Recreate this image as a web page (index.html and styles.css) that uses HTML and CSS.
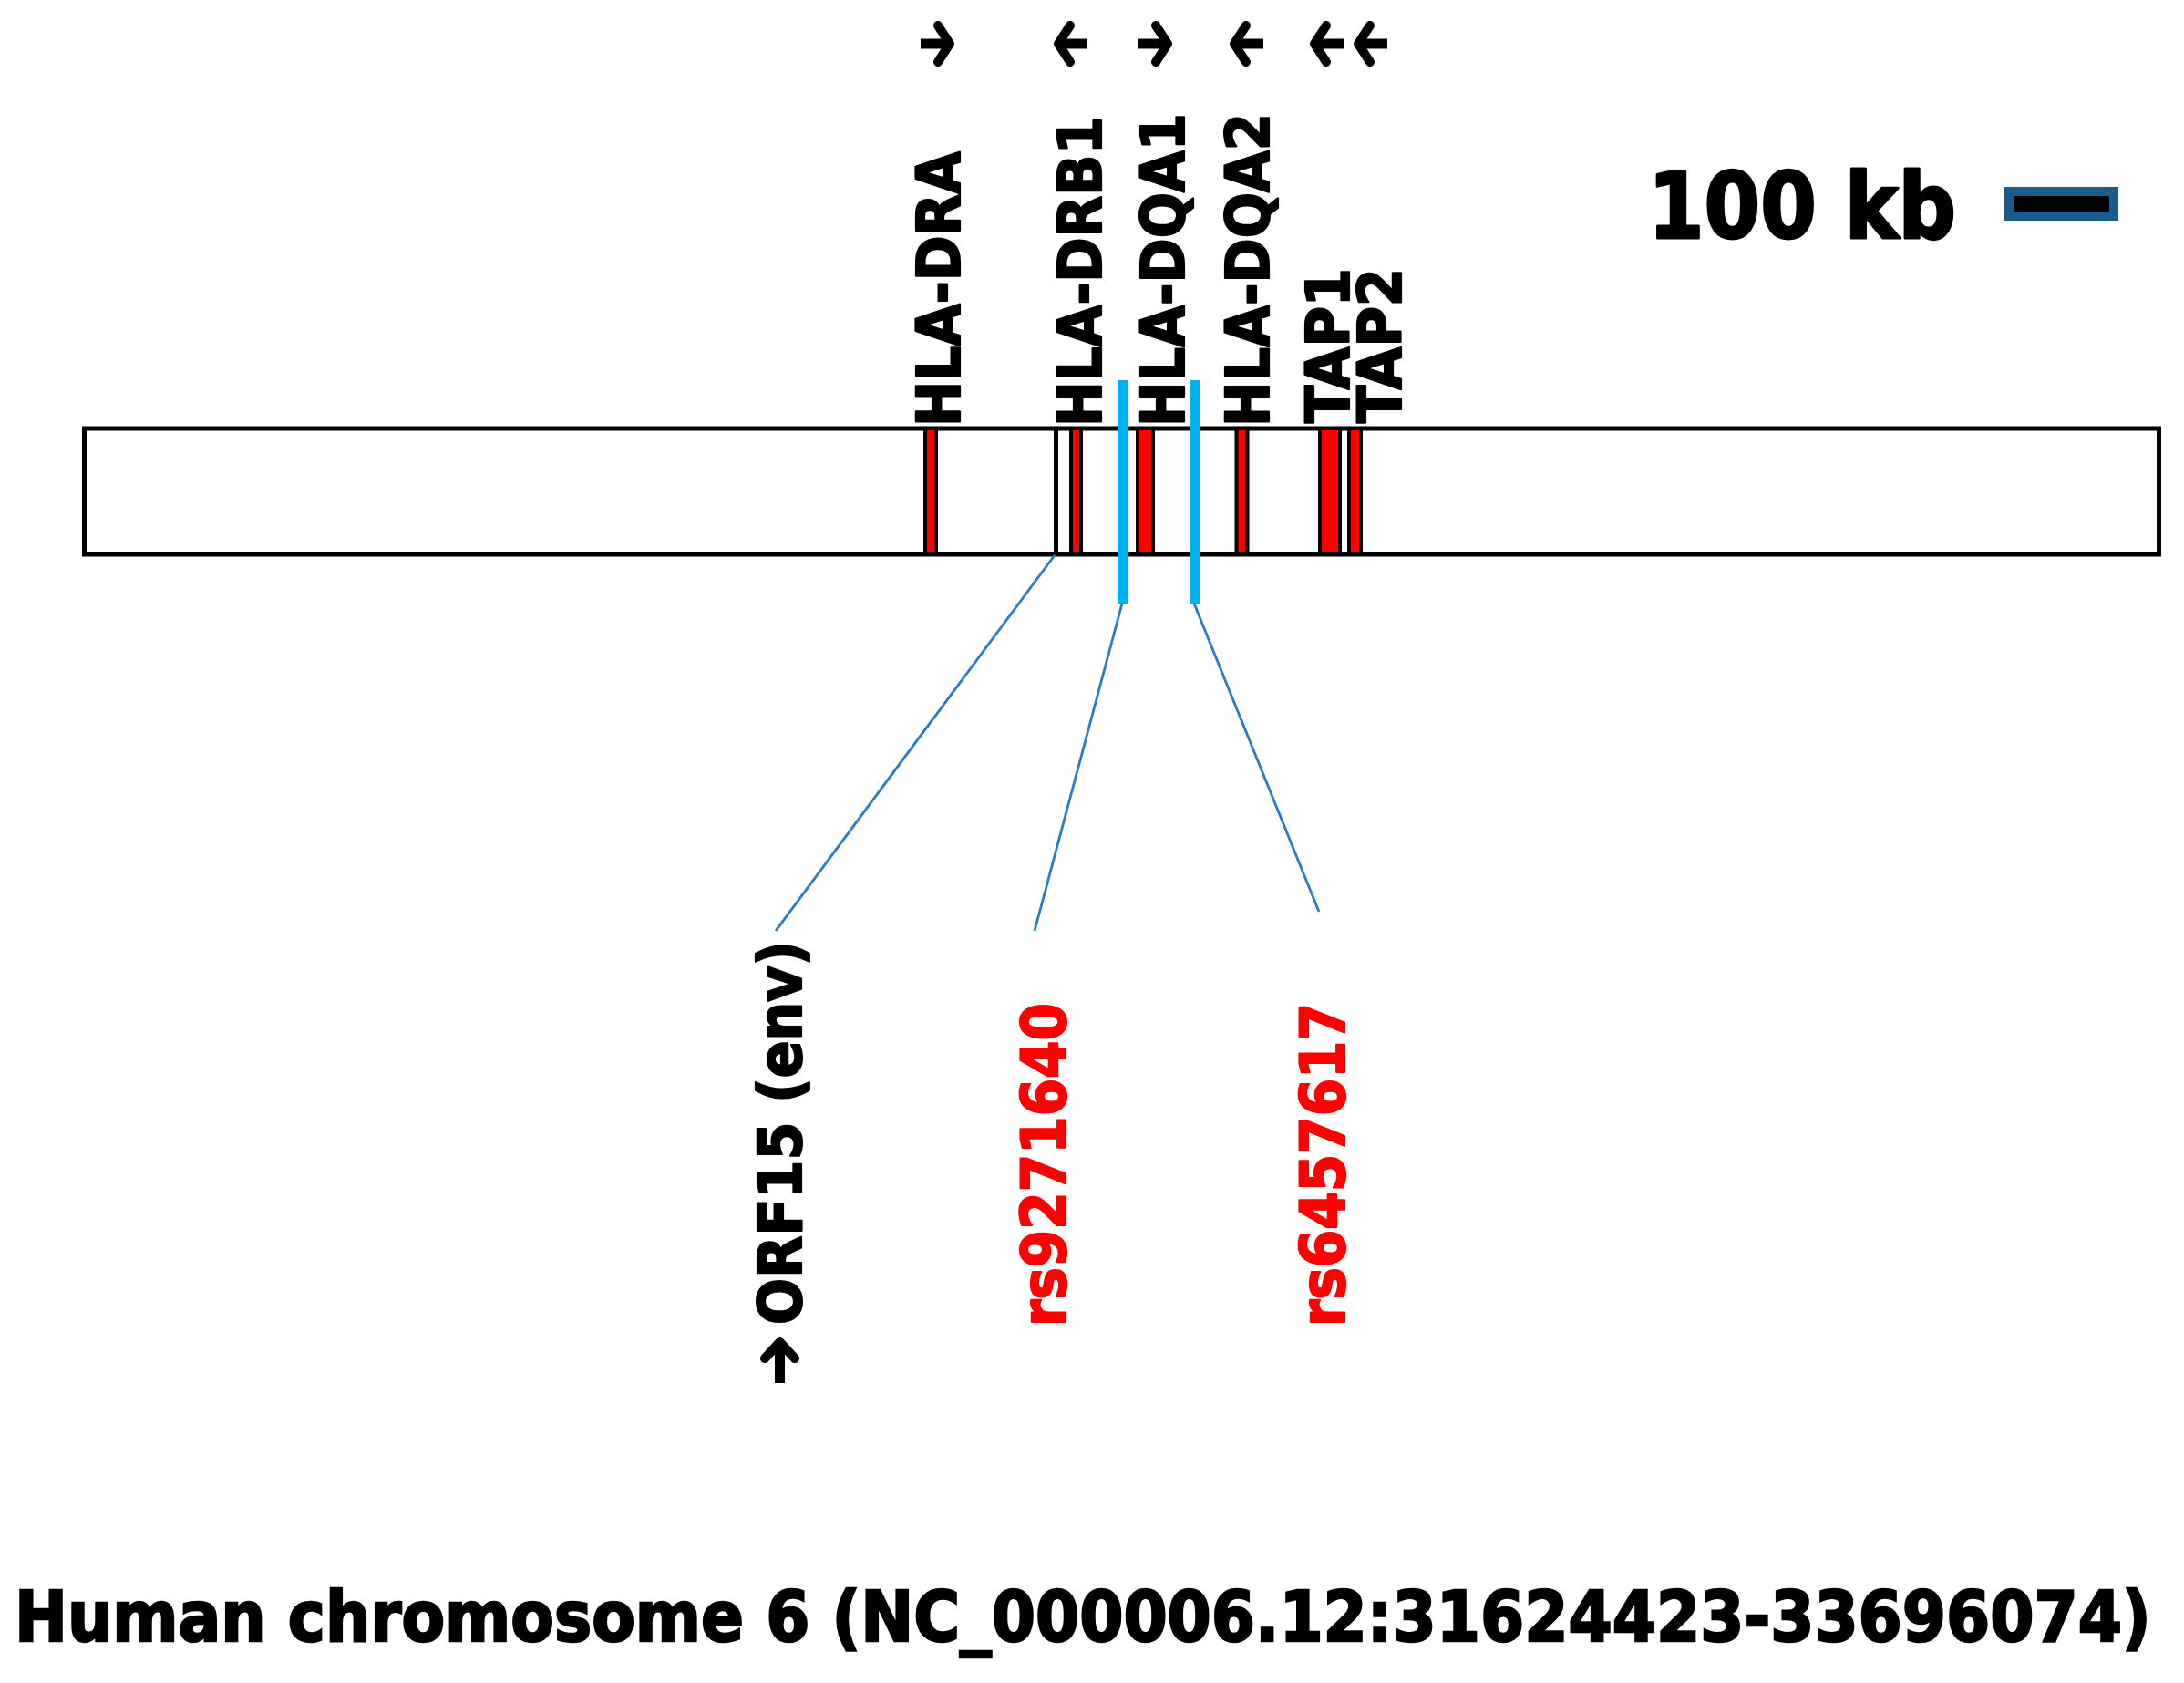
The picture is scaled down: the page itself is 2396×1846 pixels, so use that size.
FILE: index.html
```html
<!DOCTYPE html>
<html lang="en">
<head>
<meta charset="utf-8">
<title>Human chromosome 6 map</title>
<link rel="stylesheet" href="styles.css">
</head>
<body>
<div class="figure">
  <svg class="map" width="2396" height="1700" viewBox="0 0 2396 1700" xmlns="http://www.w3.org/2000/svg">
    <defs>
      <g id="arr-r">
        <path class="arrow-shaft" d="M0 25 H31"/>
        <path class="arrow-head" d="M19 5 L32 25 L19 45"/>
      </g>
      <g id="arr-l">
        <path class="arrow-shaft" d="M37 25 H6"/>
        <path class="arrow-head" d="M18 5 L5 25 L18 45"/>
      </g>
    </defs>

    <!-- strand arrows -->
    <use href="#arr-r" transform="translate(1010 23)"/>
    <use href="#arr-l" transform="translate(1156 23)"/>
    <use href="#arr-r" transform="translate(1249 23)"/>
    <use href="#arr-l" transform="translate(1349 23)"/>
    <use href="#arr-l" transform="translate(1437 23)"/>
    <use href="#arr-l" transform="translate(1485 23)"/>

    <!-- gene labels -->
    <text class="label" transform="translate(1053 468) rotate(-90)" textLength="302" lengthAdjust="spacingAndGlyphs">HLA-DRA</text>
    <text class="label" transform="translate(1208 468) rotate(-90)" textLength="340" lengthAdjust="spacingAndGlyphs">HLA-DRB1</text>
    <text class="label" transform="translate(1299 468) rotate(-90)" textLength="344" lengthAdjust="spacingAndGlyphs">HLA-DQA1</text>
    <text class="label" transform="translate(1392 468) rotate(-90)" textLength="344" lengthAdjust="spacingAndGlyphs">HLA-DQA2</text>
    <text class="label" transform="translate(1480 464) rotate(-90)" textLength="170" lengthAdjust="spacingAndGlyphs">TAP1</text>
    <text class="label" transform="translate(1537 464) rotate(-90)" textLength="170" lengthAdjust="spacingAndGlyphs">TAP2</text>

    <!-- scale -->
    <text class="scale-text" x="1808" y="261" textLength="338" lengthAdjust="spacingAndGlyphs">100 kb</text>
    <rect class="scale-bar" x="2204" y="210" width="115" height="27"/>

    <!-- chromosome -->
    <rect class="chrom" x="92.5" y="470" width="2276" height="138"/>
    <rect class="band" x="1015" y="470" width="12" height="138"/>
    <rect class="marker" x="1156" y="470" width="5" height="138"/>
    <rect class="band" x="1175" y="470" width="11" height="138"/>
    <rect class="band" x="1248" y="470" width="17" height="138"/>
    <rect class="band" x="1356.5" y="470" width="12" height="138"/>
    <rect class="band" x="1448" y="470" width="22" height="138"/>
    <rect class="band" x="1480" y="470" width="13" height="138"/>

    <!-- SNP markers -->
    <rect class="snp" x="1226" y="417" width="11" height="245"/>
    <rect class="snp" x="1305" y="417" width="11" height="245"/>

    <!-- connectors -->
    <path class="link" d="M1157 609 L851 1021"/>
    <path class="link" d="M1231 662 L1135 1021"/>
    <path class="link" d="M1310 662 L1447 1000"/>

    <!-- lower labels -->
    <path class="arrow-shaft" d="M855.5 1517 V1476"/>
    <path class="arrow-head thin" d="M839 1490 L855.5 1472 L872 1490"/>
    <text class="label" transform="translate(879 1453) rotate(-90)" textLength="421" lengthAdjust="spacingAndGlyphs">ORF15 (env)</text>
    <text class="label snp-label" transform="translate(1169 1455) rotate(-90)" textLength="355" lengthAdjust="spacingAndGlyphs">rs9271640</text>
    <text class="label snp-label" transform="translate(1475 1455) rotate(-90)" textLength="355" lengthAdjust="spacingAndGlyphs">rs6457617</text>
  </svg>
  <p class="caption"><span class="caption-text">Human chromosome 6 (NC_000006.12:31624423-33696074)</span></p>
</div>
</body>
</html>
```

FILE: styles.css
```css
html, body {
  margin: 0;
  padding: 0;
  background: #ffffff;
}

.figure {
  width: 2396px;
  height: 1846px;
  display: flex;
  flex-direction: column;
  overflow: hidden;
}

.map {
  display: block;
  flex: none;
}

.caption {
  margin: 0;
  padding: 24px 0 0 16px;
  font-family: "DejaVu Sans", "Liberation Sans", sans-serif;
  font-weight: bold;
  font-size: 76px;
  line-height: 100px;
  color: #000000;
  white-space: nowrap;
}

.caption-text {
  display: inline-block;
  transform: scaleX(0.912);
  transform-origin: 0 0;
  -webkit-text-stroke: 2.5px #000000;
}

.arrow-shaft {
  fill: none;
  stroke: #000000;
  stroke-width: 11;
}

.arrow-head {
  fill: none;
  stroke: #000000;
  stroke-width: 10;
  stroke-linecap: round;
  stroke-linejoin: round;
}

.arrow-head.thin {
  stroke-width: 10;
}

.label {
  font-family: "DejaVu Sans", "Liberation Sans", sans-serif;
  font-weight: bold;
  font-size: 66px;
  fill: #000000;
  stroke: #000000;
  stroke-width: 2.2;
  stroke-linejoin: round;
}

.snp-label {
  font-size: 68px;
  fill: #ff0000;
  stroke: #ff0000;
}

.scale-text {
  font-family: "DejaVu Sans", "Liberation Sans", sans-serif;
  font-weight: bold;
  font-size: 99px;
  fill: #000000;
  stroke: #000000;
  stroke-width: 3;
  stroke-linejoin: round;
}

.scale-bar {
  fill: #000000;
  stroke: #1a5c8e;
  stroke-width: 10;
}

.chrom {
  fill: #ffffff;
  stroke: #000000;
  stroke-width: 5;
}

.band {
  fill: #ff0000;
  stroke: #000000;
  stroke-width: 4;
}

.marker {
  fill: #000000;
}

.snp {
  fill: #00b0f0;
}

.link {
  fill: none;
  stroke: #2a7bc4;
  stroke-width: 2.8;
}
```
